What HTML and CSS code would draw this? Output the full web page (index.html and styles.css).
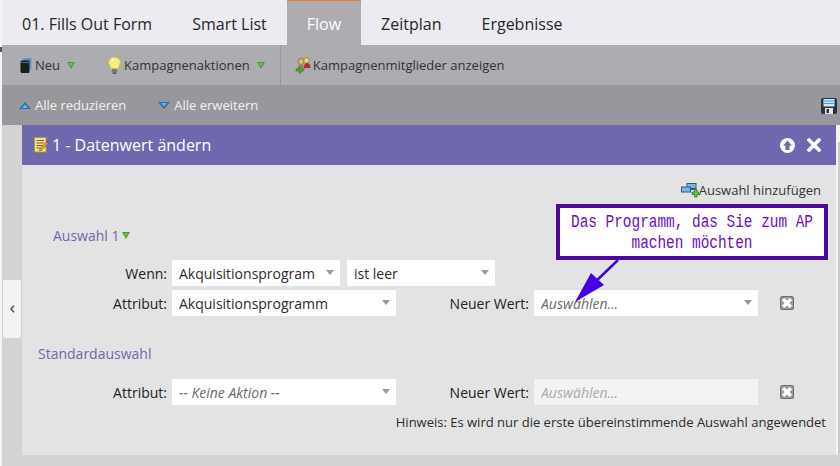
FILE: index.html
```html
<!DOCTYPE html>
<html lang="de">
<head>
<meta charset="utf-8">
<title>Flow</title>
<link rel="stylesheet" href="styles.css">
</head>
<body>
<div class="page">
  <div class="corner-mark"></div>
  <nav class="tabs">
    <div class="tab">01. Fills Out Form</div>
    <div class="tab">Smart List</div>
    <div class="tab active">Flow</div>
    <div class="tab">Zeitplan</div>
    <div class="tab">Ergebnisse</div>
  </nav>
  <div class="toolbar">
    <div class="tool tool-new">
      <svg class="ico" width="12" height="17" viewBox="0 0 12 17"><path d="M3 1.500h8v3H3z" fill="#3f8fd0"/><path d="M10.500 1v11" stroke="#3f8fd0" stroke-width="1.400"/><rect x="0.500" y="3.500" width="9" height="12.500" rx="1.500" fill="#1d1d1f"/><path d="M1 5.500h8" stroke="#666" stroke-width="1"/></svg>
      <span>Neu</span>
      <svg class="caret" width="8" height="7" viewBox="0 0 8 7"><path d="M0 0h8L4 7z" fill="#4f9d32"/><path d="M2 1h4L4 4.500z" fill="#72bf52"/></svg>
    </div>
    <div class="tool tool-actions">
      <svg class="ico" width="13" height="19" viewBox="0 0 14 19"><path d="M7 .6c3.500 0 6.200 2.500 6.200 5.700 0 2.500-2 3.800-2.500 6.700h-7.400C3 10.100 .8 8.800 .8 6.300 .8 3.100 3.500.6 7 .6z" fill="#f8ee7a" stroke="#d8c84c" stroke-width=".8"/><path d="M4 4.500c.6-1.300 1.700-2 3-2" stroke="#fffde0" stroke-width="1.400" fill="none"/><rect x="4" y="13" width="6" height="4" rx="1" fill="#77777b"/><rect x="5.200" y="17" width="3.600" height="1.500" fill="#444"/></svg>
      <span>Kampagnenaktionen</span>
      <svg class="caret" width="8" height="7" viewBox="0 0 8 7"><path d="M0 0h8L4 7z" fill="#4f9d32"/><path d="M2 1h4L4 4.500z" fill="#72bf52"/></svg>
    </div>
    <div class="tool tool-members">
      <svg width="17" height="17" viewBox="0 0 17 17"><circle cx="6" cy="4.500" r="3" fill="#d9b98c" stroke="#7a5a3a" stroke-width=".7"/><path d="M2 13c0-4 1.500-5.500 4-5.500s4 1.500 4 5.500z" fill="#9c8a68"/><circle cx="11.500" cy="3.500" r="2.800" fill="#f0d27a" stroke="#8a6e2a" stroke-width=".7"/><path d="M9 11c0-3.500 1-5 3-5s3.500 1.500 3.500 5z" fill="#a8322a"/><path d="M1 12h3.500V9.500L9 13l-4.500 3.700V14H1z" fill="#4ea52e" stroke="#2e6e1a" stroke-width=".6"/></svg>
      <span>Kampagnenmitglieder anzeigen</span>
    </div>
  </div>
  <div class="subbar">
    <div class="sub-item sub-first">
      <svg width="12" height="7" viewBox="0 0 12 7"><path d="M6 0l6 7H0z" fill="#2a6fb0"/><path d="M6 2.600L9 6H3z" fill="#6cb4e6"/></svg>
      <span>Alle reduzieren</span>
    </div>
    <div class="sub-item sub-second">
      <svg width="12" height="7" viewBox="0 0 12 7"><path d="M0 0h12L6 7z" fill="#2a6fb0"/><path d="M3 1h6L6 4.400z" fill="#6cb4e6"/></svg>
      <span>Alle erweitern</span>
    </div>
    <svg class="save" width="16" height="16" viewBox="0 0 16 16"><rect width="16" height="16" rx="2" fill="#2f3136"/><rect x="2.500" y="1" width="11" height="7.500" fill="#cfe6f8"/><path d="M2.500 3h11M2.500 5.500h11" stroke="#4a9ae0" stroke-width="1"/><rect x="4" y="10" width="8" height="6" fill="#e6e6e6"/><rect x="5.500" y="11" width="2.500" height="4" fill="#2f3136"/></svg>
  </div>
  <main class="stage">
    <div class="stage-edge"></div>
    <div class="handle"><svg width="5" height="8" viewBox="0 0 5 8"><path d="M4 .8L1 4l3 3.200" fill="none" stroke="#555" stroke-width="1.500"/></svg></div>
    <section class="panel">
      <header class="panel-head">
        <svg width="15" height="16" viewBox="0 0 15 16"><rect x=".5" y=".5" width="11.500" height="14.500" fill="#f3e48c" stroke="#a8984a"/><path d="M2.500 3.500h7.500M2.500 6h7.500M2.500 8.500h6M2.500 11h4" stroke="#6b6238" stroke-width="1"/><path d="M5.500 14l1-3 6.500-6.500 1.600 1.600L8 12.800z" fill="#e8a030" stroke="#6a4a1a" stroke-width=".6"/><path d="M12.500 5l1.600 1.600 .8-.9-1.600-1.600z" fill="#c83a30"/></svg>
        <h1 class="panel-title">1 - Datenwert ändern</h1>
        <svg class="head-up" width="15" height="15" viewBox="0 0 15 15"><circle cx="7.500" cy="7.500" r="7.500" fill="#fff"/><path d="M7.500 2.800L12 7.500H9.500V12h-4V7.500H3z" fill="#6e69ae"/></svg>
        <svg class="head-x" width="14" height="14" viewBox="0 0 14 14"><path d="M2 2l10 10M12 2L2 12" stroke="#fff" stroke-width="3.600" stroke-linecap="square"/></svg>
      </header>
      <div class="panel-body">
        <div class="add-row">
          <svg width="18" height="15" viewBox="0 0 18 15"><rect x="6" y=".5" width="9" height="5" fill="#7fb6e0" stroke="#2b5a80"/><rect x=".5" y="4" width="9" height="5" fill="#7fb6e0" stroke="#2b5a80"/><path d="M9.500 6.500h4" stroke="#2b5a80"/><path d="M11 9h2.500V6.500h2.500V9H18v2.500h-2V14h-2.500v-2.500H11z" fill="#5cc24a" stroke="#26701c" stroke-width=".7"/></svg>
          <span>Auswahl hinzufügen</span>
        </div>
        <div class="group-title group-first">
          <span>Auswahl 1</span>
          <svg width="8" height="7" viewBox="0 0 8 7"><path d="M0 0h8L4 7z" fill="#4f9d32"/><path d="M2 1h4L4 4.500z" fill="#72bf52"/></svg>
        </div>
        <div class="row">
          <label class="label">Wenn:</label>
          <div class="select w168"><span class="clip">Akquisitionsprogramm</span><i class="arrow"></i></div>
          <div class="select w148 next"><span class="clip">ist leer</span><i class="arrow"></i></div>
        </div>
        <div class="row row-second">
          <label class="label">Attribut:</label>
          <div class="select w224"><span class="clip">Akquisitionsprogramm</span><i class="arrow"></i></div>
          <label class="label label-value">Neuer Wert:</label>
          <div class="select w224 placeholder"><span class="clip">Auswählen...</span><i class="arrow"></i></div>
          <svg class="remove" width="14" height="14" viewBox="0 0 14 14"><rect width="14" height="14" rx="2.500" fill="#6e6e70"/><rect x="1" y="1" width="12" height="12" rx="2" fill="#9c9c9e"/><path d="M4.300 4.300l5.400 5.400M9.700 4.300l-5.400 5.400" stroke="#fff" stroke-width="3.400" stroke-linecap="square"/></svg>
        </div>
        <div class="group-title group-default"><span>Standardauswahl</span></div>
        <div class="row">
          <label class="label">Attribut:</label>
          <div class="select w224 placeholder"><span class="clip">-- Keine Aktion --</span><i class="arrow"></i></div>
          <label class="label label-value">Neuer Wert:</label>
          <div class="select w224 placeholder disabled"><span class="clip">Auswählen...</span></div>
          <svg class="remove" width="14" height="14" viewBox="0 0 14 14"><rect width="14" height="14" rx="2.500" fill="#6e6e70"/><rect x="1" y="1" width="12" height="12" rx="2" fill="#9c9c9e"/><path d="M4.300 4.300l5.400 5.400M9.700 4.300l-5.400 5.400" stroke="#fff" stroke-width="3.400" stroke-linecap="square"/></svg>
        </div>
        <p class="hint">Hinweis: Es wird nur die erste übereinstimmende Auswahl angewendet</p>
      </div>
    </section>
    <div class="callout"><div class="callout-text">Das Programm, das Sie zum AP<br>machen möchten</div></div>
    <svg class="pointer" width="60" height="60" viewBox="0 0 60 60"><path d="M48 2L22 27" stroke="#4400e0" stroke-width="2.500"/><path d="M5 44L21 15 34 27z" fill="#4400e0"/></svg>
  </main>
</div>
</body>
</html>
```
FILE: styles.css
```css
* { box-sizing: border-box; }
html, body { margin: 0; padding: 0; }
body { background: #f4f4f4; font-family: "Open Sans", "Liberation Sans", sans-serif; }
.page { position: relative; width: 840px; height: 466px; padding-left: 2px; overflow: hidden; display: flex; flex-direction: column; }
.corner-mark { position: absolute; left: 0; top: 47px; width: 2px; height: 5px; background: #555; }

.tabs { display: flex; height: 45px; background: #ecebf1; flex: none; }
.tab { padding: 0 20px; font-size: 16px; line-height: 49px; color: #262626; }
.tab.active { background: #adacb0; color: #fff; border-top: 1px solid #e8792a; line-height: 47px; }

.toolbar { display: flex; align-items: center; height: 40px; flex: none; background: #adacb0; color: #333; font-size: 13px; }
.tool { display: flex; align-items: center; height: 40px; }
.tool-new { padding-left: 18px; }
.tool-new span { margin-left: 3px; }
.tool-new .caret { margin-left: 7px; }
.tool-actions { margin-left: 33px; padding-right: 15px; border-right: 1px solid #98979b; }
.tool-actions span { margin-left: 3px; }
.tool-actions .caret { margin-left: 7px; }
.tool-members { padding-left: 14px; }
.tool-members span { margin-left: 1px; }

.subbar { display: flex; align-items: center; height: 40px; flex: none; background: #98979b; color: #f2f2f2; font-size: 13px; }
.sub-item { display: flex; align-items: center; gap: 4px; }
.sub-first { margin-left: 17px; }
.sub-second { margin-left: 32px; }
.save { margin-left: auto; margin-right: 3px; margin-top: 2px; }

.stage { position: relative; flex: 1; background: #d3d3d3; padding: 0 4px 0 20px; }
.stage-edge { position: absolute; right: 0; top: 0; width: 4px; height: 330px; background: linear-gradient(#f4f4f4, #f4f4f4) left top / 2px 100% no-repeat, linear-gradient(#f4f4f4, #f4f4f4) right top / 2px 17px no-repeat, #cbcbcb; }
.handle { position: absolute; left: 1px; top: 155px; width: 18px; height: 58px; background: #f3f3f3; border-radius: 2px; display: flex; align-items: center; justify-content: center; }

.panel { display: flex; flex-direction: column; height: 330px; }
.panel-head { display: flex; align-items: center; height: 40px; flex: none; padding-left: 12px; background: #6e69ae; color: #fff; }
.panel-title { margin: 0 0 0 3px; font-size: 16px; font-weight: 400; }
.head-up { margin-left: auto; }
.head-x { margin-left: 12px; margin-right: 15px; }

.panel-body { flex: 1; background: #e3e3e3; color: #2b2b2b; font-size: 14px; }
.add-row { display: flex; justify-content: flex-end; align-items: center; height: 20px; margin-top: 15px; padding-right: 15px; font-size: 13px; color: #333; }
.group-title { display: flex; align-items: center; gap: 2px; height: 20px; font-size: 14px; color: #6e69ae; }
.group-first { margin-top: 25px; margin-bottom: 15px; padding-left: 31px; }
.group-default { margin-top: 27px; margin-bottom: 16px; padding-left: 16px; }

.row { display: flex; align-items: center; height: 26px; }
.row-second { margin-top: 4px; }
.label { width: 145px; flex: none; margin-right: 5px; text-align: right; color: #222; }
.label-value { width: 133px; }
.select { position: relative; display: flex; align-items: center; height: 26px; flex: none; padding: 0 7px; background: #fff; color: #2b2b2b; }
.w168 { width: 168px; padding-right: 24px; }
.w148 { width: 148px; }
.w224 { width: 224px; }
.next { margin-left: 7px; }
.clip { overflow: hidden; white-space: nowrap; }
.arrow { position: absolute; right: 6px; top: 10px; width: 0; height: 0; border-left: 4.500px solid transparent; border-right: 4.500px solid transparent; border-top: 5px solid #999; }
.placeholder { font-style: italic; color: #6a6a6a; }
.disabled { background: #f3f3f3; color: #aaa; }
.remove { margin-left: 22px; flex: none; }
.hint { margin: 7px 0 0; padding-right: 10px; text-align: right; font-size: 13px; line-height: 20px; color: #2b2b2b; }

.callout { position: absolute; left: 554px; top: 79px; width: 272px; height: 56px; border: 4px solid #4b0a9c; background: #fff; color: #6a0cc4; padding-top: 4px; overflow: hidden; }
.callout-text { width: 320px; margin-left: -28px; font-family: "Liberation Mono", monospace; font-size: 17.500px; line-height: 21px; text-align: center; white-space: nowrap; transform: scaleX(.823); }
.pointer { position: absolute; left: 568px; top: 133px; }
```
